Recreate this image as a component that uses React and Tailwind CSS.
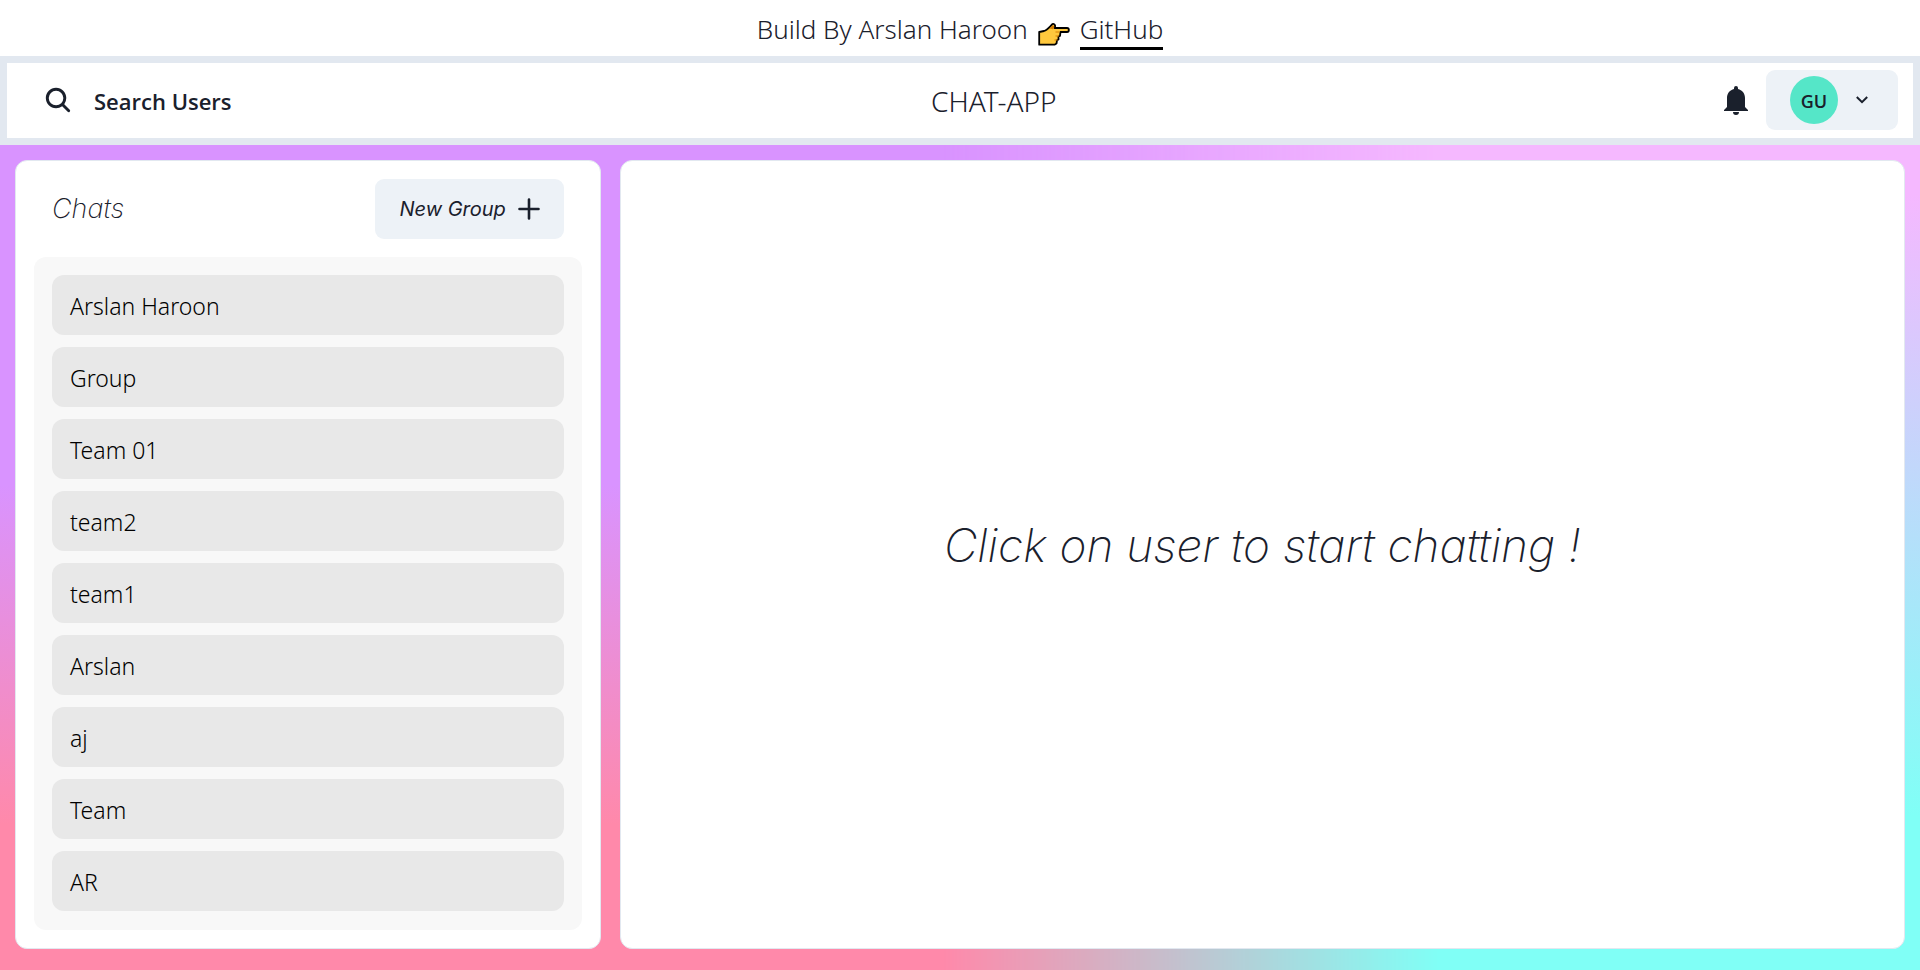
import { useState } from "react";

const chats = ["Arslan Haroon", "Group", "Team 01", "team2", "team1", "Arslan", "aj", "Team", "AR"];

const backdropLeft = "bg-[linear-gradient(to_bottom,#d993ff_50%,#ff89aa_85%)]";
const backdropRight =
  "bg-[linear-gradient(to_bottom,#f5b8ff_20%,#80fff6_84%)] [mask-image:linear-gradient(to_right,transparent_49%,black_75%)]";

function SearchIcon() {
  return (
    <svg viewBox="0 0 512 512" className="size-[30px]" fill="currentColor" aria-hidden="true">
      <path d="M456.69 421.39 362.6 327.3a173.81 173.81 0 0 0 34.84-104.58C397.44 126.38 319.06 48 222.72 48S48 126.38 48 222.72s78.38 174.72 174.72 174.72A173.81 173.81 0 0 0 327.3 362.6l94.09 94.09a25 25 0 0 0 35.3-35.3ZM97.92 222.72a124.8 124.8 0 1 1 124.8 124.8 124.95 124.95 0 0 1-124.8-124.8Z" />
    </svg>
  );
}

function BellIcon() {
  return (
    <svg viewBox="0 0 24 29" className="h-[29px] w-6" fill="currentColor" aria-hidden="true">
      <path d="M12 0a2 2 0 0 1 2 2v1c4 1 7 4 7 9v9l3 3v1H0v-1l3-3v-9c0-5 3-8 7-9V2a2 2 0 0 1 2-2ZM9 26h6a3 3 0 0 1-6 0Z" />
    </svg>
  );
}

function PointingHand() {
  return (
    <svg viewBox="0 0 32 24" className="mt-2 h-6 w-8 self-center" aria-hidden="true">
      <path
        d="M1.200 10 6 9c3-1 5-3.500 8-6.500C15 1 18.500 2.500 16.500 6H29c2.500 0 2.500 4 0 4h-6.500l-.5 4-1.500.5v3l-1.500.8-.5 3.200-2 1.200H1.200Z"
        fill="#ffc83d"
        stroke="#000"
        strokeWidth="1.800"
        strokeLinejoin="round"
      />
      <path d="M11.500 6.500c2-2 3-4 4.500-2.500.8.8 0 2-1 3.200Z" fill="#d67d00" />
      <path d="M17.500 10h4M17.500 14h3.500M16.500 18h3" stroke="#d67d00" strokeWidth="1" />
    </svg>
  );
}

export default function App() {
  const [active, setActive] = useState(null);
  return (
    <div className="relative isolate flex min-h-screen flex-col font-['Noto_Sans','Open_Sans',sans-serif] text-[#1a202c]">
      <div className={`absolute inset-0 -z-20 ${backdropLeft}`} />
      <div className={`absolute inset-0 -z-10 ${backdropRight}`} />

      <div className="flex h-14 items-center justify-center bg-white pt-1 text-[26px] leading-9 font-light">
        <p className="flex items-baseline gap-2.5">
          <span>Build By Arslan Haroon</span>
          <PointingHand />
          <a href="https://github.com" className="border-b-3 border-black">
            GitHub
          </a>
        </p>
      </div>

      <header className="flex items-center justify-between border-7 border-[#e2e8f0] bg-white px-[15px] pt-[7px] pb-2">
        <button type="button" className="flex h-15 items-center gap-[21px] pr-8 pl-[21px] font-['Open_Sans',sans-serif] text-[22px] font-semibold">
          <SearchIcon />
          <span className="pt-0.5">Search Users</span>
        </button>
        <h1 className="pt-0.5 text-[28px] font-light">CHAT-APP</h1>
        <div className="flex items-center gap-[18px]">
          <button type="button" aria-label="Notifications">
            <BellIcon />
          </button>
          <button
            type="button"
            aria-label="Account menu"
            className="flex h-15 items-center gap-[18px] rounded-[9px] bg-[#edf2f7] pr-[30px] pl-6"
          >
            <span className="flex size-12 items-center justify-center rounded-full bg-[#55e6c8] pt-0.5 font-['Open_Sans',sans-serif] text-lg font-semibold">
              GU
            </span>
            <svg viewBox="0 0 12 8" className="h-2 w-3" fill="none" stroke="currentColor" strokeWidth="2" aria-hidden="true">
              <path d="m.8 1 5.200 5.200L11.200 1" />
            </svg>
          </button>
        </div>
      </header>

      <main className="flex grow gap-[19px] px-[15px] pt-[15px] pb-[21px]">
        <section className="flex w-[31%] flex-col rounded-xl border border-[#e2e8f0] bg-white px-[18px] py-[18px]">
          <div className="flex items-center justify-between px-[18px] pb-[18px]">
            <h2 className="font-['Inter',sans-serif] text-[27px] font-extralight italic">Chats</h2>
            <button
              type="button"
              className="flex h-15 items-center gap-3 rounded-[9px] bg-[#edf2f7] px-6 font-['Inter',sans-serif] text-xl italic"
            >
              New Group
              <svg viewBox="0 0 22 22" className="size-[22px]" fill="none" stroke="currentColor" strokeWidth="2.600" strokeLinecap="round" aria-hidden="true">
                <path d="M11 1.500v19M1.500 11h19" />
              </svg>
            </button>
          </div>
          <ul className="flex grow flex-col gap-3 rounded-xl bg-[#f8f8f8] p-[18px]">
            {chats.map((name) => (
              <li key={name}>
                <button
                  type="button"
                  aria-pressed={active === name}
                  onClick={() => setActive(name)}
                  className="flex h-15 w-full items-center rounded-xl bg-[#e8e8e8] px-[18px] pt-0.5 text-[23px] font-light text-black"
                >
                  {name}
                </button>
              </li>
            ))}
          </ul>
        </section>
        <section className="flex grow items-center justify-center rounded-xl border border-[#e2e8f0] bg-white pb-[18px]">
          <p className="font-['Inter',sans-serif] text-[46px] font-extralight italic">
            Click on user to start chatting !
          </p>
        </section>
      </main>
    </div>
  );
}
